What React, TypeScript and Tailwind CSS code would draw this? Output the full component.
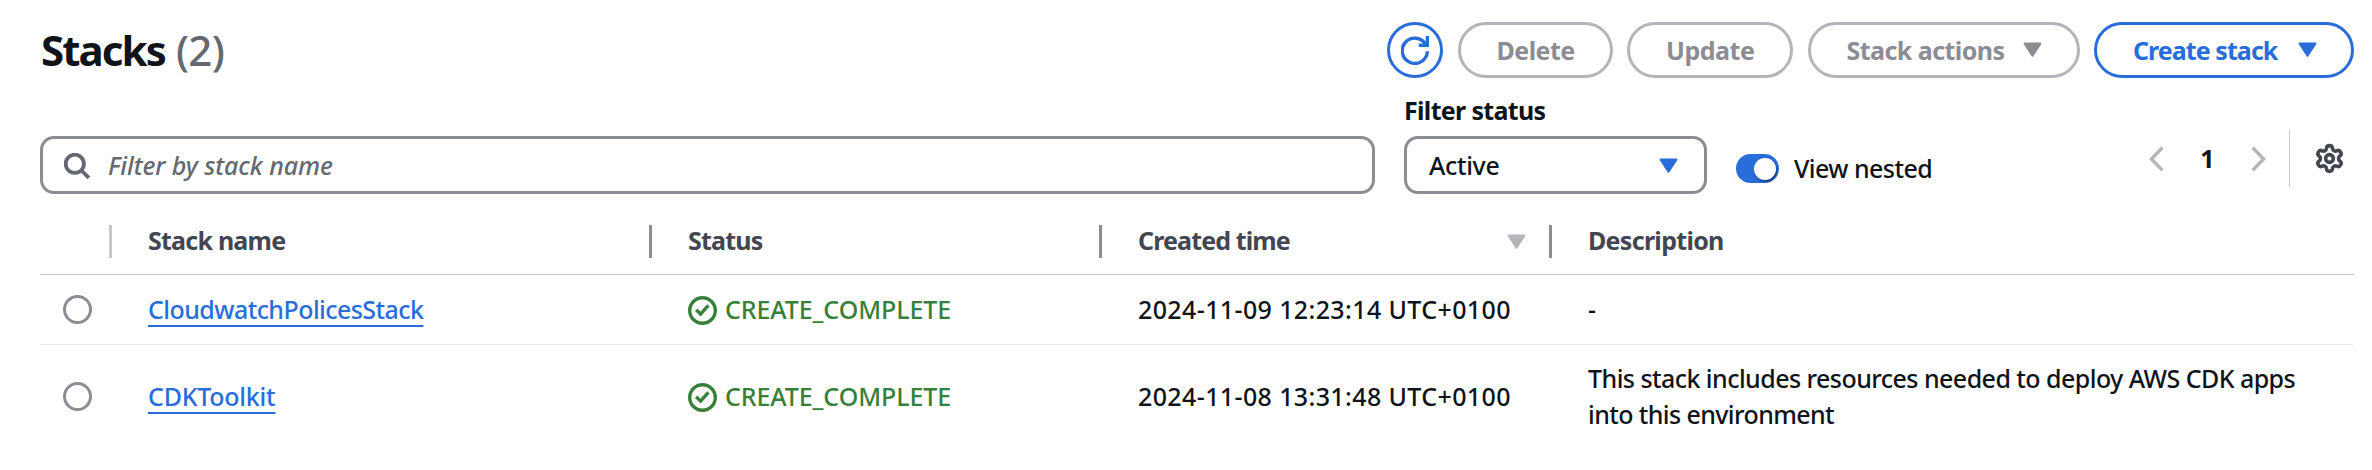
import type { ReactNode } from "react";
import { Settings } from "lucide-react";

function Caret({ className }: { className: string }) {
  return (
    <svg viewBox="0 0 19 16" className={`h-4 w-[19px] shrink-0 ${className}`} fill="currentColor" stroke="currentColor" strokeWidth="2" strokeLinejoin="round">
      <path d="M1.6 1.6h15.8L9.5 13.8z" />
    </svg>
  );
}

function PillButton({ children, className }: { children: ReactNode; className: string }) {
  return (
    <button className={`flex h-14 shrink-0 items-center rounded-full border-[3px] pb-px pl-9 font-bold ${className}`}>
      {children}
    </button>
  );
}

function HeaderCell({ children, className, divider }: { children?: ReactNode; className: string; divider?: string }) {
  return (
    <div className={`flex h-full shrink-0 items-center justify-between font-bold text-[#424650] ${className}`}>
      <div className="pb-px pl-9">{children}</div>
      {divider && <div className={`mt-0.5 h-[33px] w-[3px] ${divider}`} />}
    </div>
  );
}

function Status() {
  return (
    <div className="flex items-center gap-2 text-[#37803a]">
      <svg viewBox="0 0 29 29" className="mt-0.5 size-[29px]" fill="none" stroke="currentColor" strokeWidth="3.4">
        <circle cx="14.5" cy="14.5" r="12.8" />
        <path d="M8.2 13.7l4.4 4.4 7.8-8.8" />
      </svg>
      <span className="pb-0.5 tracking-[-0.1px]">CREATE_COMPLETE</span>
    </div>
  );
}

function Row({ name, nameClass, time, children, className }: { name: string; nameClass: string; time: string; children: ReactNode; className: string }) {
  return (
    <div className={`flex items-center ${className}`}>
      <div className="flex w-[72px] shrink-0 pl-[23px]">
        <span className="size-[29px] rounded-full border-[3px] border-[#8c8c94]" />
      </div>
      <div className="w-[540px] shrink-0 pb-0.5 pl-9">
        <a className={`text-[#296dda] underline decoration-2 underline-offset-[6px] [text-decoration-skip-ink:none] ${nameClass}`}>{name}</a>
      </div>
      <div className="w-[450px] shrink-0 pl-9">
        <Status />
      </div>
      <div className="w-[450px] shrink-0 pb-0.5 pl-9 tracking-[0.38px] whitespace-nowrap">{time}</div>
      <div className="pb-0.5 pl-9 whitespace-nowrap">{children}</div>
    </div>
  );
}

export default function App() {
  return (
    <div className="h-[470px] w-full overflow-hidden bg-white pt-[22px] pr-[18px] pl-10 font-['Noto_Sans',sans-serif] text-[25px] leading-9 font-medium text-[#0f141a]">
      <header className="flex h-14 items-center justify-between">
        <h1 className="flex gap-[11px] pl-px text-[42px] leading-[56px]">
          <span className="font-bold tracking-[-1.9px]">Stacks</span>
          <span className="tracking-[-0.7px] text-[#656871]">(2)</span>
        </h1>
        <div className="flex gap-[14.5px]">
          <button className="flex size-14 items-center justify-center rounded-full border-[3px] border-[#296dda] text-[#296dda]">
            <svg viewBox="0 0 28 29" className="h-[29px] w-7" fill="none" stroke="currentColor" strokeWidth="3.4">
              <path d="M26.4 15.2A12.6 12.6 0 1 1 24.8 8.6" />
              <path d="M26.4 0V9.2H17.8" />
            </svg>
          </button>
          <PillButton className="w-[155px] border-[#b4b4bb] tracking-[-0.53px] text-[#8c8c94]">Delete</PillButton>
          <PillButton className="w-[166px] border-[#b4b4bb] tracking-[-0.47px] text-[#8c8c94]">Update</PillButton>
          <PillButton className="w-[272px] border-[#b4b4bb] tracking-[-0.55px] text-[#8c8c94]">
            Stack actions
            <Caret className="mr-[35px] ml-auto" />
          </PillButton>
          <PillButton className="w-[260px] border-[#296dda] tracking-[-0.94px] text-[#296dda]">
            Create stack
            <Caret className="mr-[34px] ml-auto" />
          </PillButton>
        </div>
      </header>

      <section className="mt-3.5 flex h-[102px] items-end">
        <div className="flex h-[58px] w-[1335px] items-center rounded-[14px] border-[3px] border-[#8c8c94] pl-[21px] text-[#656871]">
          <svg viewBox="0 0 26 26" className="mt-0.5 size-[26px]" fill="none" stroke="currentColor" strokeWidth="3.8">
            <circle cx="10.8" cy="10.8" r="9.1" />
            <path d="M17 17l7.8 7.8" />
          </svg>
          <span className="pb-px pl-[18px] tracking-[-0.07px] italic">Filter by stack name</span>
        </div>
        <div className="ml-[29px] w-[303px]">
          <div className="mb-2 font-bold tracking-[-0.67px]">Filter status</div>
          <div className="flex h-[58px] items-center justify-between rounded-[14px] border-[3px] border-[#8c8c94] pr-[26px] pb-px pl-[22px] tracking-[-0.35px]">
            Active
            <Caret className="mt-0.5 text-[#296dda]" />
          </div>
        </div>
        <div className="mb-[7px] ml-[29px] flex items-center gap-[15px]">
          <div className="flex h-[29px] w-[43px] items-center justify-end rounded-full bg-[#296dda] pr-[3px]">
            <span className="size-[22px] rounded-full bg-white shadow-[1px_2px_2px_rgba(0,7,22,0.45)]" />
          </div>
          <span className="pb-px tracking-[-0.55px]">View nested</span>
        </div>
        <div className="mb-[7px] ml-auto flex h-[57px] items-center">
          <svg viewBox="0 0 15 26" className="h-[26px] w-[15px] text-[#b4b4bb]" fill="none" stroke="currentColor" strokeWidth="3.4">
            <path d="M13.4 1.6L2.4 13l11 11.4" />
          </svg>
          <span className="w-[87px] pb-0.5 text-center font-bold">1</span>
          <svg viewBox="0 0 15 26" className="h-[26px] w-[15px] text-[#b4b4bb]" fill="none" stroke="currentColor" strokeWidth="3.4">
            <path d="M1.6 1.6L12.6 13l-11 11.4" />
          </svg>
          <div className="ml-[23px] h-[57px] w-px bg-[#c6c6cd]" />
          <Settings className="mr-[9px] ml-6 size-[31px] text-[#424650]" strokeWidth={2.75} />
        </div>
      </section>

      <section>
        <div className="mt-[13px] flex h-[68px] items-center border-b border-[#c6c6cd]">
          <HeaderCell className="w-[72px]" divider="bg-[#c6c6cd]" />
          <HeaderCell className="w-[540px] tracking-[-0.77px]" divider="bg-[#8c8c94]">Stack name</HeaderCell>
          <HeaderCell className="w-[450px] tracking-[-0.78px]" divider="bg-[#8c8c94]">Status</HeaderCell>
          <div className="flex h-full w-[450px] shrink-0 items-center">
            <span className="pb-px pl-9 font-bold tracking-[-0.87px] text-[#424650]">Created time</span>
            <Caret className="mt-0.5 mr-[23px] ml-auto text-[#b4b4bb]" />
            <div className="mt-0.5 h-[33px] w-[3px] bg-[#8c8c94]" />
          </div>
          <HeaderCell className="tracking-[-0.7px]">Description</HeaderCell>
        </div>
        <Row className="h-[70px] border-b border-[#ebebf0]" name="CloudwatchPolicesStack" nameClass="tracking-[-0.56px]" time="2024-11-09 12:23:14 UTC+0100">-</Row>
        <Row className="h-[103px]" name="CDKToolkit" nameClass="tracking-[-0.25px]" time="2024-11-08 13:31:48 UTC+0100">
          <div className="tracking-[-0.55px]">This stack includes resources needed to deploy AWS CDK apps</div>
          <div className="tracking-[-0.6px]">into this environment</div>
        </Row>
      </section>
    </div>
  );
}
